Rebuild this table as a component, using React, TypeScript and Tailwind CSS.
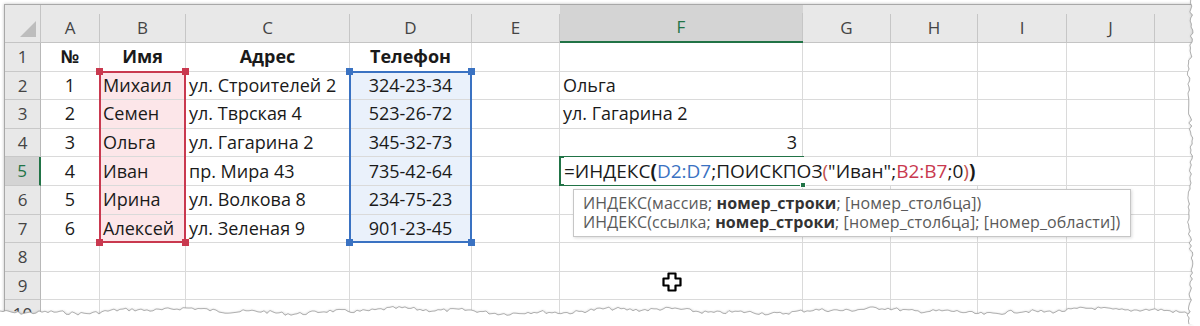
import type { ReactNode } from 'react';

const COLS = ['A', 'B', 'C', 'D', 'E', 'F', 'G', 'H', 'I', 'J', ''];

// grid coords: origin at sheet top-left (inside frame border)
const COL_W = [36, 59, 86, 164, 122, 88, 243, 88, 87, 89, 88, 60];
const HDR_H = 38;
const ROW_H = 28.6;

const DATA: Record<number, string[]> = {
  1: ['№', 'Имя', 'Адрес', 'Телефон'],
  2: ['1', 'Михаил', 'ул. Строителей 2', '324-23-34', '', 'Ольга'],
  3: ['2', 'Семен', 'ул. Тврская 4', '523-26-72', '', 'ул. Гагарина 2'],
  4: ['3', 'Ольга', 'ул. Гагарина 2', '345-32-73', '', '3'],
  5: ['4', 'Иван', 'пр. Мира 43', '735-42-64'],
  6: ['5', 'Ирина', 'ул. Волкова 8', '234-75-23'],
  7: ['6', 'Алексей', 'ул. Зеленая 9', '901-23-45'],
};

function Formula() {
  return (
    <span className="bg-white pr-1 whitespace-nowrap text-[19px] text-[#1a1a1a]">
      =ИНДЕКС<b className="font-bold">(</b>
      <span className="text-[#3a72c2]">D2:D7</span>;ПОИСКПОЗ
      <span className="text-[#c0504d]">(</span>"Иван";
      <span className="text-[#c9394f]">B2:B7</span>;0
      <span className="text-[#c0504d]">)</span>
      <b className="font-bold">)</b>
    </span>
  );
}

function cellClass(r: number, c: number) {
  // c: 1 = A ... 11 = K
  let cls = 'flex items-center border-b border-r border-[#dadada] overflow-hidden whitespace-nowrap text-[18px] text-[#1a1a1a]';
  if (r === 1) return cls + ' justify-center font-bold';
  if (c === 1 || c === 4) cls += ' justify-center';
  else if (r === 4 && c === 6) cls += ' justify-end pr-[5px]';
  else cls += ' pl-[3px]';
  if (r >= 2 && r <= 7 && c === 2) cls += ' bg-[#fce6e9]';
  if (r >= 2 && r <= 7 && c === 4) cls += ' bg-[#eaf1fb]';
  return cls;
}

function Cursor() {
  return (
    <svg width="22" height="22" viewBox="0 0 22 22" className="absolute left-[656px] top-[266px] z-30">
      <path
        d="M7.5 2.5h7v5h5v7h-5v5h-7v-5h-5v-7h5z"
        fill="#fff"
        stroke="#000"
        strokeWidth="2.2"
        strokeLinejoin="round"
      />
    </svg>
  );
}

function rand(seed: number) {
  let s = seed;
  return () => {
    s = (s * 9301 + 49297) % 233280;
    return s / 233280;
  };
}

function TornEdges() {
  const rb = rand(7);
  let bottom = '';
  for (let x = 0; x <= 1200; x += 3) {
    const y = 311 + Math.sin(x / 37) * 2 + Math.sin(x / 11) * 1 + (rb() - 0.5) * 3.4;
    bottom += (x === 0 ? 'M' : 'L') + x + ',' + y.toFixed(1);
  }
  const rr = rand(13);
  let right = '';
  for (let y = 0; y <= 326; y += 3) {
    const x = 1190 + Math.sin(y / 19) * 1.8 + (rr() - 0.5) * 3.2;
    right += (y === 0 ? 'M' : 'L') + x.toFixed(1) + ',' + y;
  }
  return (
    <svg width="1200" height="326" className="absolute left-0 top-0 z-40 pointer-events-none">
      <defs>
        <filter id="blur" x="-5%" y="-50%" width="110%" height="200%">
          <feGaussianBlur stdDeviation="1.6" />
        </filter>
      </defs>
      <path d={bottom} transform="translate(0,2)" fill="none" stroke="#555" strokeWidth="2" filter="url(#blur)" opacity="0.7" />
      <path d={bottom + 'L1200,326L0,326Z'} fill="#fff" />
      <path d={bottom} fill="none" stroke="#a0a0a0" strokeWidth="0.8" />
      <path d={right} transform="translate(2,0)" fill="none" stroke="#555" strokeWidth="2" filter="url(#blur)" opacity="0.6" />
      <path d={right + 'L1200,326L1200,0Z'} fill="#fff" />
      <path d={right} fill="none" stroke="#a0a0a0" strokeWidth="0.8" />
    </svg>
  );
}

// range outline with its four corner handles
function Range({ left, top, width, height, border, fill }: { left: number; top: number; width: number; height: number; border: string; fill: string }) {
  return (
    <div className={`absolute z-20 border-2 ${border}`} style={{ left, top, width, height }}>
      <div className={`absolute -left-[5px] -top-[5px] w-[7px] h-[7px] ${fill}`} />
      <div className={`absolute -right-[5px] -top-[5px] w-[7px] h-[7px] ${fill}`} />
      <div className={`absolute -left-[5px] -bottom-[5px] w-[7px] h-[7px] ${fill}`} />
      <div className={`absolute -right-[5px] -bottom-[5px] w-[7px] h-[7px] ${fill}`} />
    </div>
  );
}

export default function App() {
  const cells: ReactNode[] = [];

  // header row
  cells.push(
    <div key="corner" className="relative bg-[#e8e8e8] border-b border-r border-[#c4c4c4]">
      <svg width="16" height="16" className="absolute left-[15px] top-[16px]">
        <path d="M16 0V16H0Z" fill="#bdbdbd" />
      </svg>
    </div>
  );
  COLS.forEach((l, i) => {
    const active = l === 'F';
    cells.push(
      <div
        key={'h' + i}
        className={`flex items-end border-b ${active ? 'bg-[#d4d4d4] border-b-2 border-[#217346]' : 'bg-[#e8e8e8] border-[#c4c4c4]'}`}
      >
        <div
          className={`h-[28px] w-full flex items-center justify-center border-r border-[#c6c6c6] text-[17px] ${active ? 'text-[#217346]' : 'text-[#444]'}`}
        >
          {l}
        </div>
      </div>
    );
  });

  for (let r = 1; r <= 10; r++) {
    const active = r === 5;
    cells.push(
      <div
        key={'r' + r}
        className={`flex items-center justify-center border-b border-[#c8c8c8] text-[17px] ${active ? 'bg-[#d4d4d4] text-[#217346] border-r-2 border-r-[#217346]' : 'bg-[#e8e8e8] text-[#444] border-r border-r-[#b8b8b8]'}`}
      >
        {r}
      </div>
    );
    for (let c = 1; c <= 11; c++) {
      const v = DATA[r]?.[c - 1] ?? '';
      if (r === 5 && c === 6) {
        // active cell in edit mode: text spills over G..I, fill handle at the corner
        cells.push(
          <div key={`c${r}-${c}`} className="relative z-20 flex items-center pl-[3px] -mx-[1px] -mt-[1px] border-2 border-[#217346] overflow-visible">
            <Formula />
            <div className="absolute -right-[4px] -bottom-[4px] w-[6px] h-[6px] bg-[#217346] border border-white" />
          </div>
        );
        continue;
      }
      cells.push(
        <div key={`c${r}-${c}`} className={cellClass(r, c)}>
          {v}
        </div>
      );
    }
  }

  const x0 = (n: number) => COL_W.slice(0, n).reduce((a, b) => a + b, 0);
  const yTop = (r: number) => HDR_H + (r - 1) * ROW_H;

  const rangeTop = yTop(2);
  const rangeBot = yTop(8);

  return (
    <div className="relative w-[1200px] h-[326px] bg-white overflow-hidden" style={{ fontFamily: '"Open Sans", "Noto Sans", sans-serif' }}>
      <div className="ml-[4px] mt-[4px] w-[1192px] border-t border-l border-[#a8a8a8] shadow-[0_0_3px_rgba(0,0,0,0.25)]">
        <div className="relative grid grid-cols-[36px_59px_86px_164px_122px_88px_243px_88px_87px_89px_88px_60px] grid-rows-[38px_repeat(10,28.6px)]">
          {cells}

          <Range
            left={x0(2) - 1}
            top={rangeTop - 1}
            width={x0(3) - x0(2) + 1}
            height={rangeBot - rangeTop + 1}
            border="border-[#c9394f]"
            fill="bg-[#c9394f]"
          />
          <Range
            left={x0(4) - 1}
            top={rangeTop - 1}
            width={x0(5) - x0(4) + 1}
            height={rangeBot - rangeTop + 1}
            border="border-[#3a72c2]"
            fill="bg-[#3a72c2]"
          />

          {/* function tooltip */}
          <div className="absolute z-30 left-[568px] top-[184px] w-[558px] h-[48px] bg-white border border-[#c6c6c6] shadow-[1px_1px_3px_rgba(0,0,0,0.15)] px-[9px] pt-[4px] text-[16px] leading-[19px] tracking-[0.1px] text-[#5a5a5a] whitespace-nowrap">
            <div>
              ИНДЕКС(массив; <b className="font-bold text-[#333]">номер_строки</b>; [номер_столбца])
            </div>
            <div>
              ИНДЕКС(ссылка; <b className="font-bold text-[#333]">номер_строки</b>; [номер_столбца]; [номер_области])
            </div>
          </div>

          <Cursor />
        </div>
      </div>
      <TornEdges />
    </div>
  );
}
